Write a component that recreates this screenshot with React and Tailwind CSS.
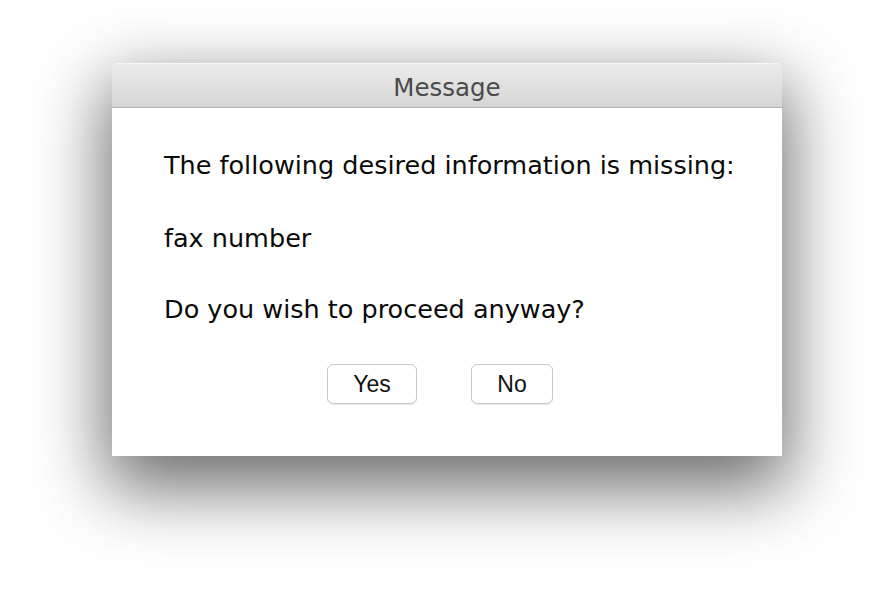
import React from 'react';

const lines = ['The following desired information is missing:', 'fax number', 'Do you wish to proceed anyway?'];

const DialogButton = ({ label, width }) => (
  <button
    className={`h-[40px] ${width} rounded-[6px] border border-[#c9c9c9] bg-white text-[23px] text-[#111] shadow-[0_1px_1px_rgba(0,0,0,0.08)]`}
    style={{ fontFamily: '"Liberation Sans", Arial, sans-serif' }}
  >
    {label}
  </button>
);

export default function App() {
  return (
    <div className="min-h-[616px] w-[894px] bg-white pl-[112px] pt-[63px]">
      <div className="flex h-[393px] w-[670px] flex-col overflow-hidden rounded-t-[6px] bg-white shadow-[0_26px_70px_6px_rgba(0,0,0,0.58)]">
        {/* barra de título */}
        <div
          className="flex h-[45px] shrink-0 items-center justify-center border-b border-[#b1b1b1] bg-gradient-to-b from-[#ededed] to-[#d5d5d5] pt-[6px] text-[24.5px] text-[#4b4b4b] shadow-[inset_0_1px_0_#f8f8f8]"
          style={{ fontFamily: '"DejaVu Sans", sans-serif' }}
        >
          Message
        </div>

        <div className="flex flex-col gap-[43px] pl-[52px] pt-[43px]" style={{ fontFamily: '"DejaVu Sans", sans-serif' }}>
          {lines.map((text, i) => (
            <p
              key={text}
              className={`h-[28px] text-[25.5px] leading-[28px] text-[#0a0a0a] ${i === 1 ? 'mt-[2px]' : ''}`}
            >
              {text}
            </p>
          ))}
        </div>

        <div className="mt-[41px] flex justify-center gap-[54px] pr-[14px]">
          <DialogButton label="Yes" width="w-[90px]" />
          <DialogButton label="No" width="w-[82px]" />
        </div>
      </div>
    </div>
  );
}
